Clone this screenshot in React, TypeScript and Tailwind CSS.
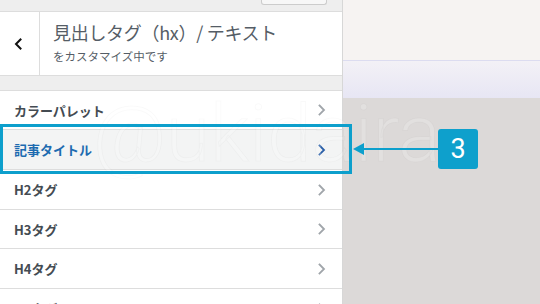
import React from "react";

const font = "font-['Noto_Sans_CJK_JP','Noto_Sans',sans-serif]";

function Chevron({ color }: { color: string }) {
  return (
    <svg width="8" height="12" viewBox="0 0 8 12" fill="none">
      <path d="M1.5 1.5 L6 6 L1.5 10.5" stroke={color} strokeWidth="1.8" strokeLinecap="square" />
    </svg>
  );
}

function Row({ label, active, h }: { label: string; active?: boolean; h: string }) {
  return (
    <div
      className={`${h} shrink-0 flex items-center justify-between pl-[14px] pr-[16px] border-b border-[#dddddd] ${
        active ? "bg-[#f3f4f4] text-[#1d6bb0]" : "bg-white text-[#444b52]"
      }`}
    >
      <span className="text-[13px] font-semibold leading-none">{label}</span>
      <Chevron color={active ? "#2a5fa8" : "#a0a5aa"} />
    </div>
  );
}

export default function App() {
  return (
    <div className={`relative w-[540px] h-[304px] overflow-hidden flex bg-[#dcd9d8] ${font}`}>
      {/* Left customizer panel */}
      <div className="w-[343px] shrink-0 h-full flex flex-col bg-white border-r border-[#d7d7d7] overflow-hidden">
        <div className="h-[12px] shrink-0 bg-[#eeeeee] border-b border-[#dddddd] flex justify-end items-start pr-[15px]">
          <div className="w-[66px] h-[5px] bg-[#f7f7f7] border border-t-0 border-[#cccccc] rounded-b-[3px]" />
        </div>
        <div className="h-[64px] shrink-0 flex border-b border-[#dddddd] bg-white">
          <div className="w-[40px] border-r border-[#dddddd] flex items-center justify-center pr-[3px]">
            <svg width="8" height="12" viewBox="0 0 8 12" fill="none">
              <path d="M6.5 1.5 L2 6 L6.5 10.5" stroke="#111" strokeWidth="2" strokeLinecap="square" />
            </svg>
          </div>
          <div className="flex flex-col pl-[13px] pt-[8px] text-[#555d66]">
            <span className="text-[18px] leading-[24px] tracking-[-0.3px]">見出しタグ（hx）/ テキスト</span>
            <span className="text-[11.5px] leading-[16px] mt-[4px]">をカスタマイズ中です</span>
          </div>
        </div>
        <div className="h-[15px] shrink-0 bg-[#eeeeee] border-b border-[#dddddd]" />
        <Row label="カラーパレット" h="h-[39px]" />
        <Row label="記事タイトル" active h="h-[40px]" />
        <Row label="H2タグ" h="h-[40px]" />
        <Row label="H3タグ" h="h-[39px]" />
        <Row label="H4タグ" h="h-[40px]" />
        <Row label="H5タグ" h="h-[40px]" />
      </div>

      {/* Right preview area */}
      <div className="flex-1 flex flex-col">
        <div className="h-[60px] shrink-0 bg-[#f6f3f2]" />
        <div className="h-[38px] shrink-0 border-t border-[#dcdcf0] bg-gradient-to-b from-[#f3f1f6] to-[#e7e6f4]" />
        <div className="flex-1 bg-[#dcd9d8]" />
      </div>

      {/* Watermark */}
      <div className="absolute left-[93px] top-[94px] text-[80px] leading-none font-['Roboto',sans-serif] font-light text-[rgba(255,255,255,0.18)] [-webkit-text-stroke:1px_rgba(0,0,0,0.025)] pointer-events-none select-none">
        @ukidaira
      </div>

      {/* Highlight box */}
      <div className="absolute left-0 top-[124px] w-[352px] h-[50px] border-[3px] border-[#0d9fcc] pointer-events-none" />

      {/* Arrow */}
      <svg className="absolute left-[352px] top-[140px]" width="90" height="18" viewBox="0 0 90 18">
        <path d="M1 9 L12 3 L12 15 Z" fill="#0d9fcc" />
        <rect x="11" y="8" width="79" height="2" fill="#0d9fcc" />
      </svg>

      {/* Badge */}
      <div className="absolute left-[438px] top-[129px] w-[40px] h-[40px] rounded-[3px] bg-[#0ea0cc] flex items-center justify-center text-white text-[27px] font-['Roboto',sans-serif] leading-none">
        3
      </div>
    </div>
  );
}
